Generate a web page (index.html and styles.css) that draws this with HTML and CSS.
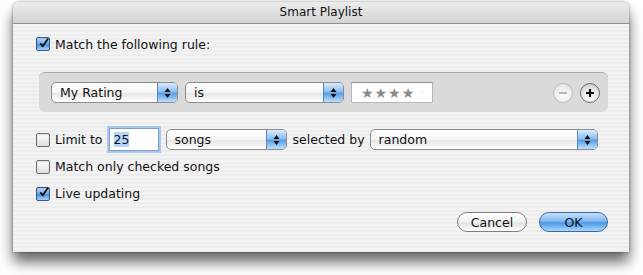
FILE: index.html
```html
<!DOCTYPE html>
<html>
<head>
  <meta charset="UTF-8">
  <title>Smart Playlist</title>
  <link rel="stylesheet" href="styles.css">
</head>
<body>
  <div class="window">
    <div class="titlebar">Smart Playlist</div>
    <div class="content">
      <div class="row first-row">
        <span class="checkbox checked"><svg width="12" height="12" viewBox="0 0 12 12"><path d="M1.5 6.5 L4.5 10 L11 0.5" fill="none" stroke="#111" stroke-width="2.2" stroke-linejoin="round"/></svg></span>
        <span class="label">Match the following rule:</span>
      </div>

      <div class="rule-box">
        <div class="popup rating-popup">
          <span class="popup-label">My Rating</span>
          <span class="popup-arrows"><svg width="7" height="12" viewBox="0 0 7 12"><path d="M3.5 1 L6.5 5 L0.5 5 Z M3.5 11 L6.5 7 L0.5 7 Z" fill="#111"/></svg></span>
        </div>
        <div class="popup is-popup">
          <span class="popup-label">is</span>
          <span class="popup-arrows"><svg width="7" height="12" viewBox="0 0 7 12"><path d="M3.5 1 L6.5 5 L0.5 5 Z M3.5 11 L6.5 7 L0.5 7 Z" fill="#111"/></svg></span>
        </div>
        <div class="stars-field"><span class="stars">★★★★</span><span class="dot">·</span></div>
        <div class="rule-buttons">
          <span class="round-btn disabled"><svg width="10" height="10" viewBox="0 0 10 10"><path d="M1 5 H9" stroke="#b8b8b8" stroke-width="2"/></svg></span>
          <span class="round-btn"><svg width="10" height="10" viewBox="0 0 10 10"><path d="M1 5 H9 M5 1 V9" stroke="#111" stroke-width="2.2"/></svg></span>
        </div>
      </div>

      <div class="row">
        <span class="checkbox"></span>
        <span class="label">Limit to</span>
        <div class="number-field"><span class="selected-text">25</span></div>
        <div class="popup songs-popup">
          <span class="popup-label">songs</span>
          <span class="popup-arrows"><svg width="7" height="12" viewBox="0 0 7 12"><path d="M3.5 1 L6.5 5 L0.5 5 Z M3.5 11 L6.5 7 L0.5 7 Z" fill="#111"/></svg></span>
        </div>
        <span class="label selected-label">selected by</span>
        <div class="popup random-popup">
          <span class="popup-label">random</span>
          <span class="popup-arrows"><svg width="7" height="12" viewBox="0 0 7 12"><path d="M3.5 1 L6.5 5 L0.5 5 Z M3.5 11 L6.5 7 L0.5 7 Z" fill="#111"/></svg></span>
        </div>
      </div>

      <div class="row">
        <span class="checkbox"></span>
        <span class="label">Match only checked songs</span>
      </div>

      <div class="row">
        <span class="checkbox checked"><svg width="12" height="12" viewBox="0 0 12 12"><path d="M1.5 6.5 L4.5 10 L11 0.5" fill="none" stroke="#111" stroke-width="2.2" stroke-linejoin="round"/></svg></span>
        <span class="label">Live updating</span>
      </div>

      <div class="button-row">
        <button class="push-btn">Cancel</button>
        <button class="push-btn default">OK</button>
      </div>
    </div>
  </div>
</body>
</html>
```

FILE: styles.css
```css
html, body {
  height: 275px;
}
body {
  margin: 0;
  background: #ffffff;
  font-family: "DejaVu Sans", Verdana, sans-serif;
  font-size: 12.5px;
  color: #111;
  overflow: hidden;
}
.window {
  margin: 2px 0 0 13px;
  width: 616px;
  height: 250px;
  border-radius: 6px 6px 0 0;
  background: repeating-linear-gradient(to bottom, #ededed 0, #ededed 2px, #f3f3f3 2px, #f3f3f3 4px);
  box-shadow: 0 10px 14px rgba(0,0,0,0.6), 0 0 3px rgba(0,0,0,0.4);
  overflow: hidden;
}
.titlebar {
  height: 21px;
  line-height: 21px;
  text-align: center;
  font-size: 12px;
  background: linear-gradient(to bottom, #ececec, #d3d3d3);
  border-bottom: 1px solid #8f8f8f;
}
.content {
  padding: 11px 21px 0 23px;
  display: flex;
  flex-direction: column;
}
.row {
  height: 27px;
  display: flex;
  align-items: center;
}
.first-row {
  height: 18px;
}
.label {
  margin-left: 5px;
  white-space: nowrap;
}
.checkbox {
  width: 12px;
  height: 12px;
  border: 1px solid #6f6f6f;
  border-radius: 2px;
  background: linear-gradient(to bottom, #ffffff, #e0e0e0);
  box-shadow: inset 0 1px 2px rgba(0,0,0,0.15);
  display: flex;
  align-items: center;
  justify-content: center;
  flex-shrink: 0;
}
.checkbox.checked {
  border-color: #2f5c94;
  background: linear-gradient(to bottom, #c5defa 0%, #6aa7e8 50%, #4a8fe0 55%, #a9d3fb 100%);
}
.checkbox svg {
  margin-top: -3px;
  margin-left: 2px;
}
.rule-box {
  margin: 19px 0 14px 3px;
  height: 40px;
  box-sizing: border-box;
  padding: 0 8px 0 12px;
  border-radius: 6px;
  background: #dadada;
  border-top: 1px solid #a9a9a9;
  display: flex;
  align-items: center;
}
.popup {
  height: 21px;
  box-sizing: border-box;
  border: 1px solid #8c8c8c;
  border-radius: 5px;
  background: linear-gradient(to bottom, #ffffff 0%, #f4f4f4 50%, #e6e6e6 55%, #ffffff 100%);
  display: flex;
  align-items: center;
  overflow: hidden;
  flex-shrink: 0;
}
.popup-label {
  flex: 1;
  padding-left: 8px;
  white-space: nowrap;
}
.popup-arrows {
  width: 19px;
  height: 100%;
  border-left: 1px solid #5a86bd;
  background: linear-gradient(to bottom, #d8ebfd 0%, #8cc0f2 45%, #5b9de6 55%, #bde2fd 100%);
  display: flex;
  align-items: center;
  justify-content: center;
}
.rating-popup {
  width: 127px;
}
.is-popup {
  width: 159px;
  margin-left: 7px;
}
.stars-field {
  width: 82px;
  height: 21px;
  box-sizing: border-box;
  margin-left: 7px;
  background: #ffffff;
  border: 1px solid #b5b5b5;
  border-top-color: #8e8e8e;
  display: flex;
  align-items: center;
  padding-left: 9px;
}
.stars {
  color: #8a8a8a;
  font-size: 14px;
  letter-spacing: 1px;
}
.dot {
  color: #c8c8c8;
  margin-left: 5px;
  font-size: 10px;
}
.rule-buttons {
  margin-left: auto;
  display: flex;
  gap: 7px;
}
.round-btn {
  width: 20px;
  height: 20px;
  box-sizing: border-box;
  border-radius: 50%;
  border: 1px solid #6e6e6e;
  background: radial-gradient(circle at 50% 70%, #ffffff 0%, #e2e2e2 60%, #b9b9b9 100%);
  display: flex;
  align-items: center;
  justify-content: center;
}
.round-btn.disabled {
  border-color: #bdbdbd;
  background: radial-gradient(circle at 50% 70%, #fafafa 0%, #ececec 60%, #d6d6d6 100%);
}
.number-field {
  width: 50px;
  height: 23px;
  box-sizing: border-box;
  margin-left: 6px;
  padding: 0 0 0 4px;
  border: 1px solid #7a9fd0;
  box-shadow: 0 0 0 2px #a9c8ee;
  background: #ffffff;
  display: flex;
  align-items: center;
  flex-shrink: 0;
}
.selected-text {
  background: #b5d5ff;
}
.songs-popup {
  width: 121px;
  margin-left: 7px;
}
.selected-label {
  margin-left: 6px;
}
.random-popup {
  width: 228px;
  margin-left: 5px;
}
.button-row {
  margin-top: 5px;
  display: flex;
  justify-content: flex-end;
  gap: 12px;
}
.push-btn {
  width: 70px;
  height: 20px;
  border-radius: 10px;
  border: 1px solid #7d7d7d;
  background: linear-gradient(to bottom, #ffffff 0%, #f2f2f2 50%, #e2e2e2 55%, #ffffff 100%);
  font: inherit;
  color: #111;
  padding: 0;
}
.push-btn.default {
  width: 69px;
  border-color: #3b6aa3;
  background: linear-gradient(to bottom, #c4e0fb 0%, #7fb8f0 45%, #4f98e6 55%, #a8d8fd 100%);
}
```
